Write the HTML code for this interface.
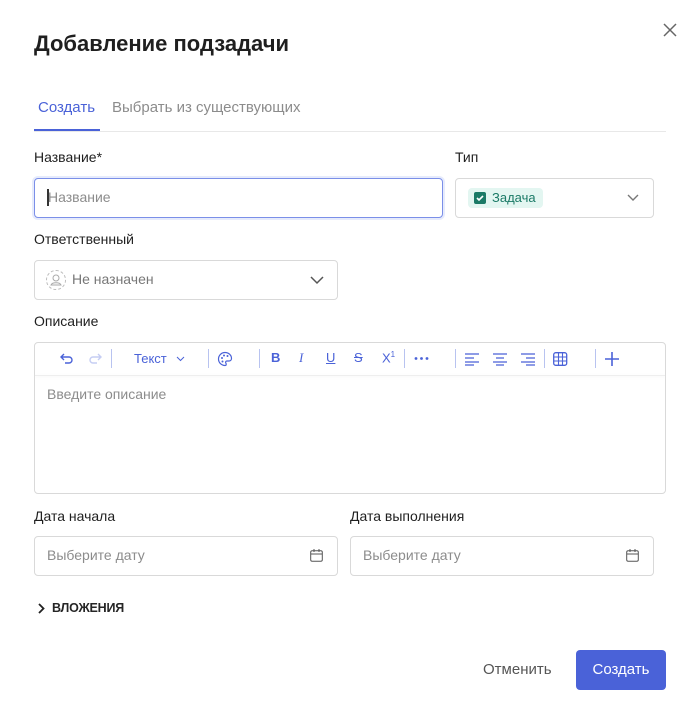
<!DOCTYPE html>
<html><head><meta charset="utf-8"><style>
*{box-sizing:border-box;margin:0;padding:0}
body{width:699px;height:718px;background:#fff;font-family:"Liberation Sans",Arial,sans-serif;position:relative;overflow:hidden;color:#1f1f1f}
.a{position:absolute}
.lbl{font-size:14px;color:#1f1f1f}
.box{position:absolute;border:1px solid #d9d9d9;border-radius:4px;background:#fff}
.ph{font-size:14px;color:#8c8c8c;position:absolute}
.tb{position:absolute;top:350px;color:#4a62d8;font-size:13px}
.sep{position:absolute;top:349px;width:1px;height:19px;background:#b8c3f0}
</style></head><body>
<div class="a" style="left:34px;top:31px;font-size:22px;font-weight:bold;color:#1f1f1f">Добавление подзадачи</div>
<svg class="a" style="left:663px;top:23px" width="14" height="14" viewBox="0 0 14 14"><path d="M1 1L13 13M13 1L1 13" stroke="#666" stroke-width="1.5"/></svg>
<div class="a" style="left:38px;top:99px;font-size:15px;color:#4a62d8">Создать</div>
<div class="a" style="left:112px;top:99px;font-size:15px;color:#8c8c8c">Выбрать из существующих</div>
<div class="a" style="left:34px;top:131px;width:632px;height:1px;background:#e8e8e8"></div>
<div class="a" style="left:34px;top:129px;width:66px;height:2px;background:#4a62d8"></div>

<div class="a lbl" style="left:34px;top:149px">Название*</div>
<div class="a lbl" style="left:455px;top:149px">Тип</div>
<div class="box" style="left:34px;top:178px;width:409px;height:40px;border-color:#7b8fe8;box-shadow:0 0 0 2px #e6ebfc"></div>
<div class="a" style="left:47px;top:189px;width:2px;height:17px;background:#333"></div>
<div class="ph" style="left:48px;top:189px">Название</div>
<div class="box" style="left:455px;top:178px;width:199px;height:40px"></div>
<div class="a" style="left:468px;top:188px;width:75px;height:20px;background:#e3f6f1;border-radius:4px"></div>
<div class="a" style="left:474px;top:192px;width:12px;height:12px;background:#1a7a66;border-radius:2px"></div>
<svg class="a" style="left:474px;top:192px" width="12" height="12"><path d="M3 6l2 2 4-4" stroke="#fff" stroke-width="1.6" fill="none"/></svg>
<div class="a" style="left:492px;top:190px;font-size:13px;color:#1a7a66">Задача</div>
<svg class="a" style="left:627px;top:194px" width="12" height="8"><path d="M1 1l5 5 5-5" stroke="#777" stroke-width="1.4" fill="none"/></svg>

<div class="a lbl" style="left:34px;top:231px">Ответственный</div>
<div class="box" style="left:34px;top:260px;width:304px;height:40px"></div>
<div class="a" style="left:46px;top:270px;width:20px;height:20px;border:1px dashed #bbb;border-radius:50%"></div>
<svg class="a" style="left:46px;top:270px" width="20" height="20"><circle cx="10" cy="8" r="3" stroke="#aaa" fill="none"/><path d="M5 15c1-3 9-3 10 0z" stroke="#aaa" fill="none"/></svg>
<div class="ph" style="left:72px;top:271px;color:#777">Не назначен</div>
<svg class="a" style="left:310px;top:276px" width="14" height="9"><path d="M1 1l6 6 6-6" stroke="#555" stroke-width="1.5" fill="none"/></svg>

<div class="a lbl" style="left:34px;top:313px">Описание</div>
<div class="box" style="left:34px;top:342px;width:632px;height:152px"></div>
<div class="a" style="left:35px;top:375px;width:630px;height:1px;background:#eee;box-shadow:0 1px 3px #eee"></div>
<svg class="a" style="left:60px;top:352px" width="14" height="13"><path d="M4 2L1 5l3 3M1 5h8a3 3 0 010 6H5" stroke="#4a62d8" stroke-width="1.4" fill="none"/></svg>
<svg class="a" style="left:88px;top:352px" width="14" height="13"><path d="M10 2l3 3-3 3M13 5H5a3 3 0 000 6h4" stroke="#c5cdf3" stroke-width="1.4" fill="none"/></svg>
<div class="sep" style="left:111px"></div>
<div class="tb" style="left:134px;top:351px">Текст</div>
<svg class="a" style="left:176px;top:356px" width="9" height="6"><path d="M1 1l3.5 3.5L8 1" stroke="#4a62d8" fill="none"/></svg>
<div class="sep" style="left:208px"></div>
<svg class="a" style="left:217px;top:351px" width="16" height="16"><path d="M8 1.5a6.5 6.5 0 100 13c1.5 0 1.5-1.5.8-2.5-.6-1 0-2 1.2-2h2a2.5 2.5 0 002.5-2.5C14.5 4 11.5 1.5 8 1.5z" stroke="#4a62d8" stroke-width="1.2" fill="none"/><circle cx="5" cy="7" r="1" fill="#4a62d8"/><circle cx="7" cy="4.5" r="1" fill="#4a62d8"/><circle cx="10.5" cy="5" r="1" fill="#4a62d8"/><circle cx="5.5" cy="10.5" r="1" fill="#4a62d8"/></svg>
<div class="sep" style="left:259px"></div>
<div class="tb" style="left:271px;font-weight:bold">B</div>
<div class="tb" style="left:299px;font-style:italic;font-family:'Liberation Serif',serif">I</div>
<div class="tb" style="left:326px;text-decoration:underline">U</div>
<div class="tb" style="left:354px;text-decoration:line-through">S</div>
<div class="tb" style="left:382px">X<sup style="font-size:8px">1</sup></div>
<div class="sep" style="left:404px"></div>
<svg class="a" style="left:414px;top:356px" width="16" height="5"><circle cx="2" cy="2.5" r="1.4" fill="#4a62d8"/><circle cx="7.5" cy="2.5" r="1.4" fill="#4a62d8"/><circle cx="13" cy="2.5" r="1.4" fill="#4a62d8"/></svg>
<div class="sep" style="left:455px"></div>
<svg class="a" style="left:464px;top:352px" width="104" height="14"><g stroke="#4a62d8" stroke-width="1.3"><path d="M1 2h14M1 6h9M1 10h14M1 13h9"/><path d="M29 2h14M32 6h8M29 10h14M32 13h8"/><path d="M57 2h14M62 6h9M57 10h14M62 13h9"/></g><rect x="89.7" y="0.7" width="13" height="12.6" rx="2" stroke="#4a62d8" stroke-width="1.3" fill="none"/><path d="M90 5h13M90 9h13M94.5 1v12M98.5 1v12" stroke="#4a62d8" stroke-width="1.1"/></svg>
<div class="sep" style="left:544px"></div>
<div class="sep" style="left:595px"></div>
<svg class="a" style="left:605px;top:352px" width="14" height="14"><path d="M7 0v14M0 7h14" stroke="#4a62d8" stroke-width="1.6"/></svg>
<div class="ph" style="left:47px;top:386px">Введите описание</div>

<div class="a lbl" style="left:34px;top:508px">Дата начала</div>
<div class="a lbl" style="left:350px;top:508px">Дата выполнения</div>
<div class="box" style="left:34px;top:536px;width:304px;height:40px"></div>
<div class="ph" style="left:47px;top:547px">Выберите дату</div>
<div class="box" style="left:350px;top:536px;width:304px;height:40px"></div>
<div class="ph" style="left:363px;top:547px">Выберите дату</div>
<svg class="a" style="left:310px;top:549px" width="13" height="13"><rect x="0.7" y="1.7" width="11.6" height="10.6" rx="1.5" stroke="#555" fill="none"/><path d="M1 5h11M4 0v3M9 0v3" stroke="#555"/></svg>
<svg class="a" style="left:626px;top:549px" width="13" height="13"><rect x="0.7" y="1.7" width="11.6" height="10.6" rx="1.5" stroke="#555" fill="none"/><path d="M1 5h11M4 0v3M9 0v3" stroke="#555"/></svg>

<svg class="a" style="left:37px;top:603px" width="8" height="11"><path d="M2 1l4.5 4.5L2 10" stroke="#222" stroke-width="1.8" fill="none"/></svg>
<div class="a" style="left:52px;top:601px;font-size:12.5px;font-weight:bold;color:#262626;letter-spacing:-0.2px">ВЛОЖЕНИЯ</div>

<div class="a" style="left:483px;top:661px;font-size:15px;color:#555">Отменить</div>
<div class="a" style="left:576px;top:650px;width:90px;height:40px;background:#4a62d8;border-radius:4px;color:#fff;font-size:15px;text-align:center;line-height:40px">Создать</div>
</body></html>
